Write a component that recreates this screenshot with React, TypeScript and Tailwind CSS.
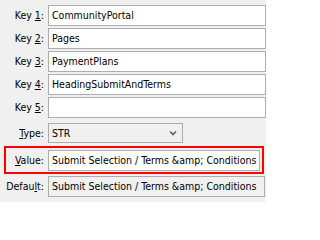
import type { ReactNode } from "react";

const keys = [
  { n: "1", value: "CommunityPortal" },
  { n: "2", value: "Pages" },
  { n: "3", value: "PaymentPlans" },
  { n: "4", value: "HeadingSubmitAndTerms" },
  { n: "5", value: "" },
];

const text = "Submit Selection / Terms &amp; Conditions";

function Label({ children, className = "" }: { children: ReactNode; className?: string }) {
  return (
    <span className={`shrink-0 pr-[4px] text-right leading-none ${className}`}>
      {children}
    </span>
  );
}

function TextBox({ value, readOnly = false, className = "" }: { value: string; readOnly?: boolean; className?: string }) {
  return (
    <div
      className={`flex h-[21px] items-center overflow-hidden border border-[#adadad] px-[3px] leading-none ${
        readOnly ? "bg-[#f0f0f0]" : "bg-white"
      } ${className}`}
    >
      <span className="whitespace-nowrap">{value}</span>
    </div>
  );
}

export default function App() {
  return (
    <div className="h-[202px] w-[266px] overflow-hidden bg-[#f0f0f0] pt-[5px] font-['DejaVu_Sans_Condensed','DejaVu_Sans',sans-serif] text-[10.5px] text-black">
      <div className="flex flex-col gap-[2px]">
        {keys.map((k) => (
          <div key={k.n} className="flex h-[21px] items-center">
            <Label className="w-[48px]">
              Key <span className="underline">{k.n}</span>:
            </Label>
            <TextBox value={k.value} className="w-[218px]" />
          </div>
        ))}
      </div>

      <div className="mt-[5px] flex h-[20px] items-center">
        <Label className="w-[48px]">
          <span className="underline">T</span>ype:
        </Label>
        <div className="flex h-[20px] w-[135px] items-center justify-between border border-[#adadad] bg-[#f0f0f0] pl-[3px] pr-[4px] leading-none">
          <span>STR</span>
          <svg width="8" height="6" viewBox="0 0 8 6" className="mr-[1px]">
            <path d="M1 1.5 L4 4.5 L7 1.5" fill="none" stroke="#606060" strokeWidth="1.6" />
          </svg>
        </div>
      </div>

      <div className="ml-[4px] mt-[3px] flex h-[28px] w-[260px] items-center border-2 border-[#ff0000]">
        <Label className="w-[42px]">
          <span className="underline">V</span>alue:
        </Label>
        <TextBox value={text} className="w-[212px]" />
      </div>

      <div className="mt-[2px] flex h-[21px] items-center">
        <Label className="w-[48px]">
          Defau<span className="underline">l</span>t:
        </Label>
        <TextBox value={text} readOnly className="w-[217px]" />
      </div>
    </div>
  );
}
